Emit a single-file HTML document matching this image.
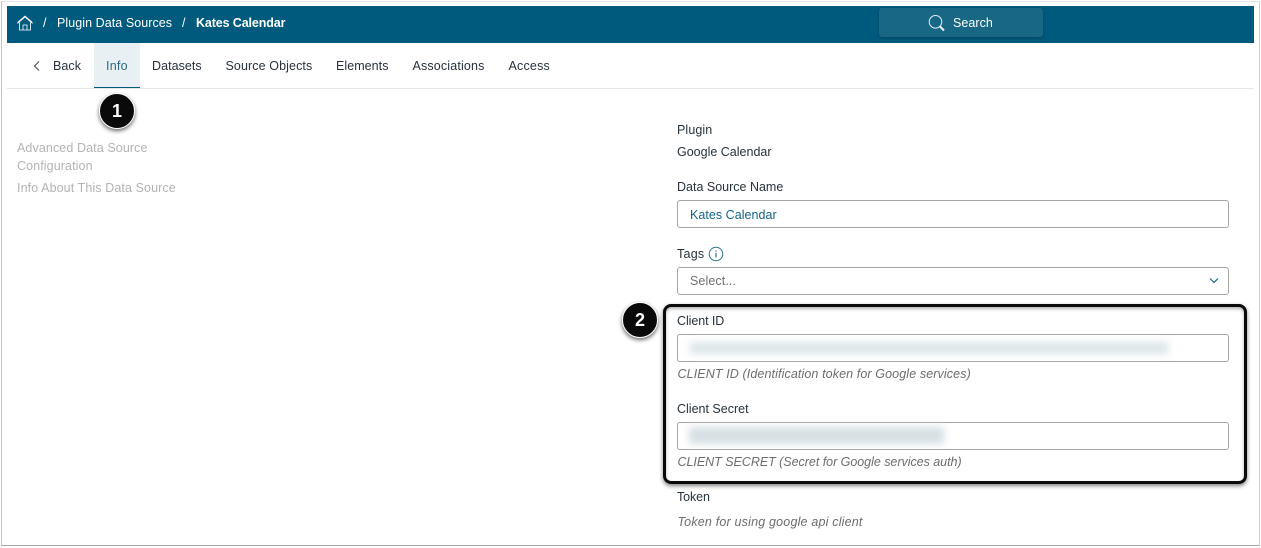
<!DOCTYPE html>
<html>
<head>
<meta charset="utf-8">
<style>
html,body{margin:0;padding:0;background:#fff}
body{width:1261px;height:548px;position:relative;overflow:hidden;font-family:"Liberation Sans",sans-serif;font-size:12.5px;color:#28323c}
.t{position:absolute;white-space:nowrap;line-height:18px;letter-spacing:.05px}
.b{position:absolute;box-sizing:border-box}
.inp{position:absolute;left:677px;width:552px;height:28px;box-sizing:border-box;border:1px solid #a6a6a6;border-radius:3px;background:#fff}
.blur{position:absolute;background:#dbe5e8;filter:blur(4px)}
.hint{font-style:italic;color:#6d6d6d}
.grey{color:#b3b3b3;letter-spacing:.1px}
.badge{position:absolute;width:36px;height:36px;border-radius:50%;background:#0a0a0a;border:1px solid #fff;box-sizing:border-box;box-shadow:0 2px 4px rgba(0,0,0,.6);color:#fff;font-weight:bold;font-size:18px;line-height:34px;text-align:center}
</style>
</head>
<body>
<!-- frame -->
<div class="b" style="left:1px;top:1px;width:1259px;height:545px;border:1px solid #c4c4c4;border-top-color:#e4e4e4;border-bottom-color:#a8a8a8;border-right-color:#cfcfcf"></div>
<!-- header -->
<div class="b" style="left:7px;top:6px;width:1247px;height:37px;background:#005a7d"></div>
<svg style="position:absolute;left:17px;top:15px" width="16" height="16" viewBox="0 0 16 16" fill="none" stroke="#fff" stroke-width=".8">
<path d="M.5 7.500 8 1l7.500 6.500M.5 8.500 8 2l7.500 6.500M2.500 7.500V15H13.500V7.500M6 15V10H10V15"/>
</svg>
<div class="t" style="left:43px;top:14px;color:#fff">/</div>
<div class="t" style="left:57px;top:14px;color:#fff;letter-spacing:.06px">Plugin Data Sources</div>
<div class="t" style="left:182px;top:14px;color:#fff">/</div>
<div class="t" style="left:196px;top:14px;color:#fff;font-weight:bold;letter-spacing:-.12px">Kates Calendar</div>
<div class="b" style="left:879px;top:8px;width:164px;height:29px;background:#186785;border-radius:3px;box-shadow:0 1px 3px rgba(0,0,0,.25)"></div>
<svg style="position:absolute;left:928px;top:14px" width="18" height="18" viewBox="0 0 18 18" fill="none" stroke="#e6eef2">
<circle cx="7.500" cy="7.800" r="6.300" stroke-width="1"/>
<path d="M12 12.500l4 4" stroke-width="2"/>
</svg>
<div class="t" style="left:953px;top:14px;color:#fff;letter-spacing:.05px">Search</div>
<!-- tabs -->
<div class="b" style="left:94px;top:43px;width:46px;height:45px;background:#e9f0f3;border-bottom:1px solid #005a7d"></div>
<div class="b" style="left:7px;top:88px;width:1247px;height:1px;background:#e6e6e6"></div>
<svg style="position:absolute;left:32px;top:60px" width="10" height="12" viewBox="0 0 10 12" fill="none" stroke="#4a4a4a" stroke-width="1.100"><path d="M7 1.500 2.500 6 7 10.500"/></svg>
<div class="t" style="left:53px;top:57px">Back</div>
<div class="t" style="left:106px;top:57px;color:#2b6a85;letter-spacing:.25px">Info</div>
<div class="t" style="left:152px;top:57px">Datasets</div>
<div class="t" style="left:225.500px;top:57px;letter-spacing:.1px">Source Objects</div>
<div class="t" style="left:336px;top:57px">Elements</div>
<div class="t" style="left:412.500px;top:57px;letter-spacing:.15px">Associations</div>
<div class="t" style="left:508.500px;top:57px;letter-spacing:.2px">Access</div>
<!-- left nav -->
<div class="t grey" style="left:17px;top:139px">Advanced Data Source</div>
<div class="t grey" style="left:17px;top:157px">Configuration</div>
<div class="t grey" style="left:17px;top:179px">Info About This Data Source</div>
<!-- form -->
<div class="t" style="left:677px;top:121px;letter-spacing:.1px">Plugin</div>
<div class="t" style="left:677px;top:143px;letter-spacing:0">Google Calendar</div>
<div class="t" style="left:677px;top:178px;letter-spacing:0">Data Source Name</div>
<div class="inp" style="top:200px"></div>
<div class="t" style="left:690px;top:206px;color:#17648a;letter-spacing:.04px">Kates Calendar</div>
<div class="t" style="left:677px;top:245px;letter-spacing:.25px">Tags</div>
<svg style="position:absolute;left:708px;top:246px" width="16" height="16" viewBox="0 0 16 16" fill="none" stroke="#2b7391"><circle cx="8" cy="8" r="6.800" stroke-width="1"/><path d="M8 7v4.400M8 4.200v1.400" stroke-width="1.200"/></svg>
<div class="inp" style="top:267px"></div>
<div class="t" style="left:690px;top:272px;color:#6f6f6f;letter-spacing:.1px">Select...</div>
<svg style="position:absolute;left:1209px;top:277px" width="10" height="8" viewBox="0 0 10 8" fill="none" stroke="#17648a" stroke-width="1.200"><path d="M1 1.500 5 5.500 9 1.500"/></svg>
<div class="t" style="left:677px;top:312px;letter-spacing:-.08px">Client ID</div>
<div class="inp" style="top:334px"></div>
<div class="blur" style="left:690px;top:342px;width:478px;height:12px"></div>
<div class="t hint" style="left:677.500px;top:365px;letter-spacing:.11px">CLIENT ID (Identification token for Google services)</div>
<div class="t" style="left:677px;top:400px;letter-spacing:0">Client Secret</div>
<div class="inp" style="top:422px"></div>
<div class="blur" style="left:689px;top:427px;width:255px;height:17px;background:#d6e0e4"></div>
<div class="t hint" style="left:677.500px;top:453px;letter-spacing:-.03px">CLIENT SECRET (Secret for Google services auth)</div>
<div class="t" style="left:677px;top:488px;letter-spacing:-.1px">Token</div>
<div class="t hint" style="left:677.500px;top:513px;letter-spacing:.19px">Token for using google api client</div>
<!-- callouts -->
<div class="b" style="left:663px;top:304px;width:584px;height:180px;border:3px solid #0a0a0a;border-radius:8px;box-shadow:0 2px 4px rgba(0,0,0,.5),inset 0 2px 3px rgba(0,0,0,.3)"></div>
<div class="badge" style="left:99px;top:93px">1</div>
<div class="badge" style="left:622px;top:302px">2</div>
</body>
</html>
